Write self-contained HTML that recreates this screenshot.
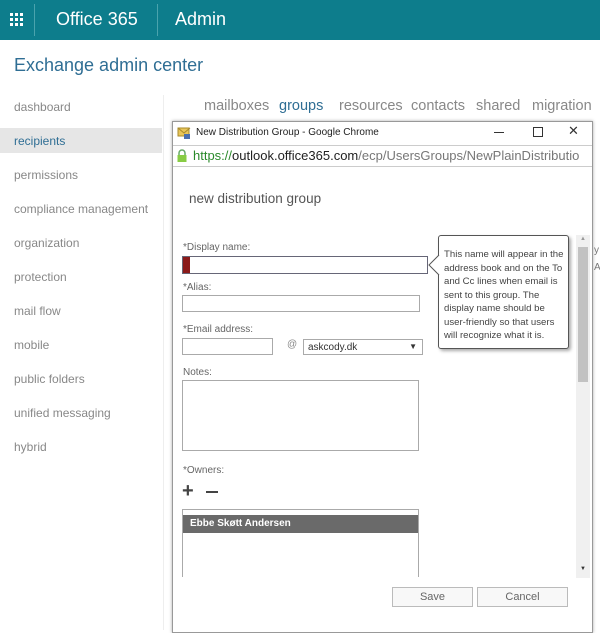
<!DOCTYPE html>
<html><head><style>
*{margin:0;padding:0;box-sizing:border-box}
body{width:600px;height:630px;overflow:hidden;background:#fff;font-family:"Liberation Sans",sans-serif;position:relative}
.top{position:absolute;left:0;top:0;width:600px;height:40px;background:#0d7d8c;color:#fff}
.abs{position:absolute}
.nav{position:absolute;left:14px;font-size:12px;color:#888}
.tab{position:absolute;top:98px;font-size:14.5px;color:#888}
.lbl{position:absolute;left:183px;font-size:10px;color:#666}
.inp{position:absolute;border:1px solid #aaa;background:#fff}
</style></head><body>
<div class="top">
 <svg class="abs" style="left:10px;top:13px" width="14" height="14"><g fill="#fff"><rect x="0" y="0" width="3" height="3"/><rect x="5" y="0" width="3" height="3"/><rect x="10" y="0" width="3" height="3"/><rect x="0" y="5" width="3" height="3"/><rect x="5" y="5" width="3" height="3"/><rect x="10" y="5" width="3" height="3"/><rect x="0" y="10" width="3" height="3"/><rect x="5" y="10" width="3" height="3"/><rect x="10" y="10" width="3" height="3"/></g></svg>
 <div class="abs" style="left:34px;top:4px;width:1px;height:32px;background:#4aa3ad"></div>
 <div class="abs" style="left:56px;top:9px;font-size:18px">Office 365</div>
 <div class="abs" style="left:157px;top:4px;width:1px;height:32px;background:#4aa3ad"></div>
 <div class="abs" style="left:175px;top:9px;font-size:18px">Admin</div>
</div>
<div class="abs" style="left:14px;top:55px;font-size:18px;color:#2f6e94">Exchange admin center</div>
<div class="abs" style="left:0;top:128px;width:162px;height:25px;background:#e6e6e6"></div>
<div class="abs" style="left:163px;top:95px;width:1px;height:535px;background:#eee"></div>
<div class="nav" style="top:100px">dashboard</div>
<div class="nav" style="top:134px;color:#2f6e94">recipients</div>
<div class="nav" style="top:168px">permissions</div>
<div class="nav" style="top:202px">compliance management</div>
<div class="nav" style="top:236px">organization</div>
<div class="nav" style="top:270px">protection</div>
<div class="nav" style="top:304px">mail flow</div>
<div class="nav" style="top:338px">mobile</div>
<div class="nav" style="top:372px">public folders</div>
<div class="nav" style="top:406px">unified messaging</div>
<div class="nav" style="top:440px">hybrid</div>
<div class="tab" style="left:204px">mailboxes</div>
<div class="tab" style="left:279px;color:#2f6e94">groups</div>
<div class="tab" style="left:339px">resources</div>
<div class="tab" style="left:411px">contacts</div>
<div class="tab" style="left:476px">shared</div>
<div class="tab" style="left:532px">migration</div>
<div class="abs" style="left:172px;top:121px;width:421px;height:512px;background:#fff;border:1px solid #999;box-shadow:0 0 3px #aaa"></div>
<div class="abs" style="left:173px;top:122px;width:419px;height:23px;background:#fff"></div>
<svg class="abs" style="left:177px;top:126px" width="14" height="14"><rect x="1" y="2" width="11" height="8" fill="#e8c55a" stroke="#a88a2a"/><path d="M1 2l6 5 6-5" stroke="#a88a2a" fill="none"/><rect x="7" y="8" width="6" height="5" fill="#4a6fb0"/></svg>
<div class="abs" style="left:196px;top:127px;font-size:10px;color:#222">New Distribution Group - Google Chrome</div>
<div class="abs" style="left:494px;top:132px;width:10px;height:1px;background:#333"></div>
<div class="abs" style="left:533px;top:127px;width:10px;height:10px;border:1px solid #333"></div>
<div class="abs" style="left:568px;top:123px;font-size:13px;color:#333">✕</div>
<div class="abs" style="left:173px;top:145px;width:419px;height:22px;border-top:1px solid #ccc;border-bottom:1px solid #ccc;background:#fff"></div>
<svg class="abs" style="left:176px;top:149px" width="12" height="14"><path d="M3 6V4a3 3 0 0 1 6 0v2" stroke="#6a6" fill="none" stroke-width="1.5"/><rect x="1.5" y="6" width="9" height="7" fill="#8c4"/></svg>
<div class="abs" style="left:193px;top:148px;font-size:13px;color:#777;white-space:nowrap"><span style="color:#2a8a2a">https://</span><span style="color:#222">outlook.office365.com</span>/ecp/UsersGroups/NewPlainDistributio</div>
<div class="abs" style="left:189px;top:191px;font-size:13.5px;color:#555">new distribution group</div>
<div class="lbl" style="top:242px">*Display name:</div>
<div class="inp" style="left:182px;top:256px;width:246px;height:18px;border-color:#667"></div>
<div class="abs" style="left:183px;top:257px;width:7px;height:16px;background:#8b1a1a"></div>
<div class="lbl" style="top:282px">*Alias:</div>
<div class="inp" style="left:182px;top:295px;width:238px;height:17px"></div>
<div class="lbl" style="top:324px">*Email address:</div>
<div class="inp" style="left:182px;top:338px;width:91px;height:17px"></div>
<div class="abs" style="left:287px;top:339px;font-size:10px;color:#888">@</div>
<div class="inp" style="left:303px;top:339px;width:120px;height:16px;font-size:10px;color:#333;padding:2px 4px">askcody.dk<span style="position:absolute;right:5px;top:2px;font-size:8px">▼</span></div>
<div class="lbl" style="top:367px">Notes:</div>
<div class="inp" style="left:182px;top:380px;width:237px;height:71px"></div>
<div class="abs" style="left:438px;top:235px;width:131px;height:114px;background:#fff;border:1px solid #555;border-radius:3px;box-shadow:2px 2px 3px #aaa;font-size:9.6px;line-height:13.5px;color:#444;padding:12px 0 0 5px">This name will appear in the address book and on the To and Cc lines when email is sent to this group. The display name should be user-friendly so that users will recognize what it is.</div>
<svg class="abs" style="left:428px;top:254px" width="12" height="22"><path d="M11 1L1 11l10 10" fill="#fff" stroke="#555"/></svg>
<div class="lbl" style="top:465px">*Owners:</div>
<div class="abs" style="left:182px;top:480px;font-size:20px;color:#444;font-weight:bold">+</div>
<div class="abs" style="left:206px;top:491px;width:12px;height:2px;background:#444"></div>
<div class="inp" style="left:182px;top:509px;width:237px;height:68px;border-bottom:none"></div>
<div class="abs" style="left:183px;top:515px;width:235px;height:18px;background:#6a6a6a;color:#fff;font-size:10px;font-weight:bold;padding:3px 7px">Ebbe Skøtt Andersen</div>
<div class="abs" style="left:576px;top:235px;width:14px;height:343px;background:#f0f0f0"></div>
<div class="abs" style="left:578px;top:247px;width:10px;height:135px;background:#c2c2c2"></div>
<div class="abs" style="left:580px;top:236px;font-size:6px;color:#999">▲</div>
<div class="abs" style="left:580px;top:566px;font-size:6px;color:#333">▼</div>
<div class="abs" style="left:392px;top:587px;width:81px;height:20px;border:1px solid #bbb;background:#f8f8f8;font-size:11px;color:#666;text-align:center;line-height:18px">Save</div>
<div class="abs" style="left:477px;top:587px;width:91px;height:20px;border:1px solid #bbb;background:#f8f8f8;font-size:11px;color:#666;text-align:center;line-height:18px">Cancel</div>
<div class="abs" style="left:594px;top:245px;font-size:10px;color:#777">y</div>
<div class="abs" style="left:594px;top:262px;font-size:10px;color:#777">A</div>
</body></html>
